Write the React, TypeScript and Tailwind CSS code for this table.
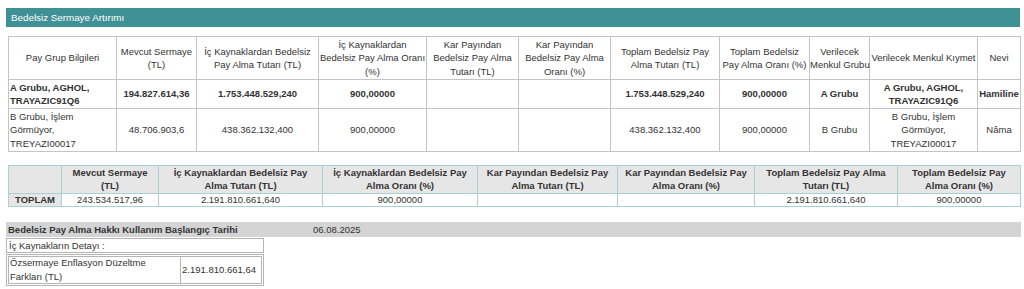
import React from "react";

const th1 = "border border-[#c4c4c4] px-0 text-center font-normal align-middle whitespace-nowrap";
const td1 = "border border-[#c4c4c4] px-[1px] text-center align-middle";
const th2 = "border border-[#a9d0d2] px-[1px] text-center font-bold align-middle bg-[#e6e6e6] whitespace-nowrap";
const td2 = "border border-[#a9d0d2] px-[1px] text-center align-middle";

export default function App() {
  return (
    <div
      className="w-[1024px] h-[289px] bg-white text-[#333] text-[9.5px] leading-[13.4px] overflow-hidden"
      style={{ fontFamily: '"Liberation Sans", Arial, sans-serif' }}
    >
      <div className="pt-[8px] pl-[6px] pr-[4px]">
        <div className="h-[19px] bg-[#3f9196] text-white text-[9.8px] flex items-center pl-[5px]">
          Bedelsiz Sermaye Artırımı
        </div>
      </div>

      <div className="pl-[8px] pt-[9px]">
        <table className="table-fixed border-collapse w-[1012px]">
          <colgroup>
            <col className="w-[108px]" />
            <col className="w-[80px]" />
            <col className="w-[122px]" />
            <col className="w-[108px]" />
            <col className="w-[92px]" />
            <col className="w-[92px]" />
            <col className="w-[109px]" />
            <col className="w-[90px]" />
            <col className="w-[60px]" />
            <col className="w-[108px]" />
            <col className="w-[43px]" />
          </colgroup>
          <thead>
            <tr className="h-[43px]">
              <th className={th1}>Pay Grup Bilgileri</th>
              <th className={th1}>Mevcut Sermaye<br />(TL)</th>
              <th className={th1}>İç Kaynaklardan Bedelsiz<br />Pay Alma Tutarı (TL)</th>
              <th className={th1}>İç Kaynaklardan<br />Bedelsiz Pay Alma Oranı<br />(%)</th>
              <th className={th1}>Kar Payından<br />Bedelsiz Pay Alma<br />Tutarı (TL)</th>
              <th className={th1}>Kar Payından<br />Bedelsiz Pay Alma<br />Oranı (%)</th>
              <th className={th1}>Toplam Bedelsiz Pay<br />Alma Tutarı (TL)</th>
              <th className={th1}>Toplam Bedelsiz<br />Pay Alma Oranı (%)</th>
              <th className={th1}>Verilecek<br />Menkul Grubu</th>
              <th className={th1}>Verilecek Menkul Kıymet</th>
              <th className={th1}>Nevi</th>
            </tr>
          </thead>
          <tbody>
            <tr className="h-[29px] font-bold">
              <td className={td1 + " text-left"}>A Grubu, AGHOL,<br />TRAYAZIC91Q6</td>
              <td className={td1}>194.827.614,36</td>
              <td className={td1}>1.753.448.529,240</td>
              <td className={td1}>900,00000</td>
              <td className={td1}></td>
              <td className={td1}></td>
              <td className={td1}>1.753.448.529,240</td>
              <td className={td1}>900,00000</td>
              <td className={td1}>A Grubu</td>
              <td className={td1}>A Grubu, AGHOL,<br />TRAYAZIC91Q6</td>
              <td className={td1 + " whitespace-nowrap px-0"}>Hamiline</td>
            </tr>
            <tr className="h-[43px]">
              <td className={td1 + " text-left"}>B Grubu, İşlem<br />Görmüyor,<br />TREYAZI00017</td>
              <td className={td1}>48.706.903,6</td>
              <td className={td1}>438.362.132,400</td>
              <td className={td1}>900,00000</td>
              <td className={td1}></td>
              <td className={td1}></td>
              <td className={td1}>438.362.132,400</td>
              <td className={td1}>900,00000</td>
              <td className={td1}>B Grubu</td>
              <td className={td1}>B Grubu, İşlem<br />Görmüyor,<br />TREYAZI00017</td>
              <td className={td1}>Nâma</td>
            </tr>
          </tbody>
        </table>
      </div>

      <div className="pl-[8px] pt-[13px]">
        <table className="table-fixed border-collapse w-[1012px]">
          <colgroup>
            <col className="w-[53px]" />
            <col className="w-[97px]" />
            <col className="w-[164px]" />
            <col className="w-[155px]" />
            <col className="w-[140px]" />
            <col className="w-[137px]" />
            <col className="w-[143px]" />
            <col className="w-[123px]" />
          </colgroup>
          <thead>
            <tr className="h-[27px]">
              <th className={th2}></th>
              <th className={th2}>Mevcut Sermaye<br />(TL)</th>
              <th className={th2}>İç Kaynaklardan Bedelsiz Pay<br />Alma Tutarı (TL)</th>
              <th className={th2}>İç Kaynaklardan Bedelsiz Pay<br />Alma Oranı (%)</th>
              <th className={th2}>Kar Payından Bedelsiz Pay<br />Alma Tutarı (TL)</th>
              <th className={th2}>Kar Payından Bedelsiz Pay<br />Alma Oranı (%)</th>
              <th className={th2}>Toplam Bedelsiz Pay Alma<br />Tutarı (TL)</th>
              <th className={th2}>Toplam Bedelsiz Pay<br />Alma Oranı (%)</th>
            </tr>
          </thead>
          <tbody>
            <tr className="h-[13px] leading-[12px]">
              <td className={th2}>TOPLAM</td>
              <td className={td2}>243.534.517,96</td>
              <td className={td2}>2.191.810.661,640</td>
              <td className={td2}>900,00000</td>
              <td className={td2}></td>
              <td className={td2}></td>
              <td className={td2}>2.191.810.661,640</td>
              <td className={td2}>900,00000</td>
            </tr>
          </tbody>
        </table>
      </div>

      <div className="pl-[6px] pr-[3px] pt-[15px]">
        <div className="h-[15px] bg-[#d4d4d4] flex items-center">
          <div className="w-[307px] pl-[2px] font-bold">Bedelsiz Pay Alma Hakkı Kullanım Başlangıç Tarihi</div>
          <div>06.08.2025</div>
        </div>
      </div>

      <div className="pl-[6px] pt-[1px] w-[264px]">
        <div className="border border-[#b5b5b5] h-[15px] flex items-center pl-[2px]">
          İç Kaynakların Detayı :
        </div>
        <div className="mt-[1px] border border-[#b5b5b5] p-[1px] flex">
          <div className="w-[173px] h-[28px] border border-[#b5b5b5] flex items-center pl-[1px]">
            Özsermaye Enflasyon Düzeltme<br />Farkları (TL)
          </div>
          <div className="flex-1 border border-[#b5b5b5] border-l-0 flex items-center pl-[1px] whitespace-nowrap">
            2.191.810.661,64
          </div>
        </div>
      </div>
    </div>
  );
}
